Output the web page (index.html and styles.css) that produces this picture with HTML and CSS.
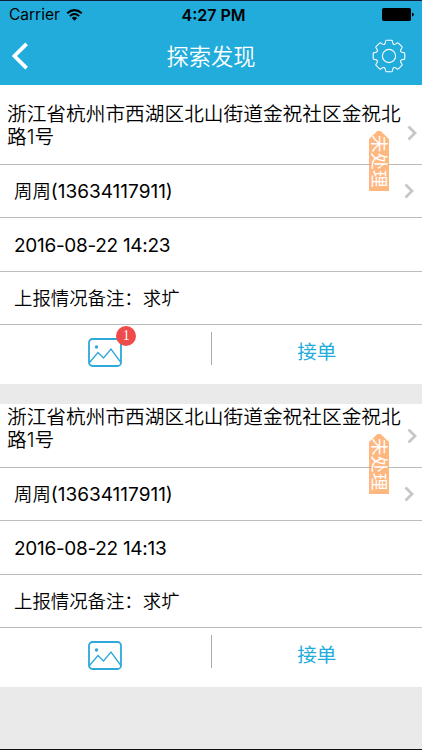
FILE: index.html
```html
<!DOCTYPE html>
<html lang="zh-CN">
<head>
  <meta charset="UTF-8">
  <meta name="viewport" content="width=device-width, initial-scale=1.0">
  <title>探索发现</title>
  <link rel="stylesheet" href="styles.css">
</head>
<body>
  <div class="app">
    <header class="header">
      <div class="status-bar">
        <div class="carrier">
          <span>Carrier</span>
          <svg class="wifi" width="17" height="12" viewBox="0 0 17 12">
            <path d="M1.2 4.3 Q8.5 -2 15.8 4.3" fill="none" stroke="#000" stroke-width="2"/>
            <path d="M3.8 7.1 Q8.5 3 13.2 7.1" fill="none" stroke="#000" stroke-width="1.9"/>
            <path d="M5.8 9 Q8.5 6.6 11.2 9 L8.5 11.8 Z" fill="#000"/>
          </svg>
        </div>
        <div class="time">4:27 PM</div>
        <svg class="battery" width="32" height="13" viewBox="0 0 32 13">
          <rect x="0" y="0" width="29" height="13" rx="1.8" fill="#000"/>
          <path d="M30 4.5 Q31.8 5 31.8 6.5 Q31.8 8 30 8.5 Z" fill="#000"/>
        </svg>
      </div>
      <nav class="nav-bar">
        <svg class="back" width="18" height="28" viewBox="0 0 18 28">
          <path d="M15.6 1.8 L3.4 14 L15.6 26.2" fill="none" stroke="#fff" stroke-width="3.8"/>
        </svg>
        <h1 class="title">探索发现</h1>
        <svg class="gear" width="34" height="34" viewBox="0 0 34 34" fill="none" stroke="#fff" stroke-width="1.1">
          <path id="teeth" d="M14.5 1.2 H19.5 Q20.3 1.2 20.4 2.2 C20.6 4.6 20.8 4.9 21.8 5.4 C22.8 5.8 23.4 5.6 24.9 4.2 Q25.7 3.5 26.4 4.1 L29.9 7.6 Q30.5 8.3 29.8 9.1 C28.4 10.6 28.2 11.2 28.6 12.2 C29.1 13.2 29.4 13.4 31.8 13.6 Q32.8 13.7 32.8 14.5"/>
          <use href="#teeth" transform="rotate(90 17 17)"/>
          <use href="#teeth" transform="rotate(180 17 17)"/>
          <use href="#teeth" transform="rotate(270 17 17)"/>
          <circle cx="17" cy="17" r="6.6"/>
        </svg>
      </nav>
    </header>

    <main class="list">
      <section class="card">
        <div class="row row-address">
          <p class="address">浙江省杭州市西湖区北山街道金祝社区金祝北路1号</p>
          <svg class="arrow" width="10" height="16" viewBox="0 0 10 16"><path d="M1.5 1.5 L8 8 L1.5 14.5" fill="none" stroke="#c7c7c7" stroke-width="2.8"/></svg>
          <div class="tag"><span>未处理</span></div>
        </div>
        <div class="row">
          <p class="text">周周<span class="num">(13634117911)</span></p>
          <svg class="arrow" width="10" height="16" viewBox="0 0 10 16"><path d="M1.5 1.5 L8 8 L1.5 14.5" fill="none" stroke="#c7c7c7" stroke-width="2.8"/></svg>
        </div>
        <div class="row"><p class="text num date">2016-08-22 14:23</p></div>
        <div class="row"><p class="text">上报情况备注：求圹</p></div>
        <div class="actions">
          <div class="action">
            <div class="photo">
              <svg width="34" height="30" viewBox="0 0 34 30">
                <rect x="1" y="1" width="32" height="27" rx="3.5" fill="none" stroke="#2ea7db" stroke-width="1.8"/>
                <path d="M1.5 24.5 L10 14.5 L15.5 20 L23 11 L32.5 24" fill="none" stroke="#2ea7db" stroke-width="1.3"/>
                <circle cx="8.5" cy="9" r="1.7" fill="#2ea7db"/>
              </svg>
              <span class="badge">1</span>
            </div>
          </div>
          <div class="divider"></div>
          <div class="action accept">接单</div>
        </div>
      </section>

      <section class="card">
        <div class="row row-address">
          <p class="address">浙江省杭州市西湖区北山街道金祝社区金祝北路1号</p>
          <svg class="arrow" width="10" height="16" viewBox="0 0 10 16"><path d="M1.5 1.5 L8 8 L1.5 14.5" fill="none" stroke="#c7c7c7" stroke-width="2.8"/></svg>
          <div class="tag"><span>未处理</span></div>
        </div>
        <div class="row">
          <p class="text">周周<span class="num">(13634117911)</span></p>
          <svg class="arrow" width="10" height="16" viewBox="0 0 10 16"><path d="M1.5 1.5 L8 8 L1.5 14.5" fill="none" stroke="#c7c7c7" stroke-width="2.8"/></svg>
        </div>
        <div class="row"><p class="text num date">2016-08-22 14:13</p></div>
        <div class="row"><p class="text">上报情况备注：求圹</p></div>
        <div class="actions">
          <div class="action">
            <div class="photo">
              <svg width="34" height="30" viewBox="0 0 34 30">
                <rect x="1" y="1" width="32" height="27" rx="3.5" fill="none" stroke="#2ea7db" stroke-width="1.8"/>
                <path d="M1.5 24.5 L10 14.5 L15.5 20 L23 11 L32.5 24" fill="none" stroke="#2ea7db" stroke-width="1.3"/>
                <circle cx="8.5" cy="9" r="1.7" fill="#2ea7db"/>
              </svg>
            </div>
          </div>
          <div class="divider"></div>
          <div class="action accept">接单</div>
        </div>
      </section>
    </main>
  </div>
</body>
</html>
```

FILE: styles.css
```css
* {
  box-sizing: border-box;
}

body {
  margin: 0;
  font-family: 'Inter', 'Noto Sans CJK SC', sans-serif;
  background-color: #eaeaea;
  color: #000;
}

h1, p {
  margin: 0;
  font-weight: normal;
}

svg {
  display: block;
}

.app {
  height: 750px;
  overflow: hidden;
  border-top: 1px solid #12203a;
  border-bottom: 1px solid #111;
}

.header {
  height: 84px;
  background-color: #21acdb;
}

.status-bar {
  height: 27px;
  display: grid;
  grid-template-columns: 1fr auto 1fr;
  align-items: center;
  padding: 0 8px 0 9px;
  font-size: 16px;
}

.carrier {
  display: flex;
  align-items: center;
  gap: 6px;
  font-size: 15.5px;
}

.time {
  font-weight: 600;
  padding-left: 4px;
}

.battery {
  justify-self: end;
}

.nav-bar {
  height: 56px;
  display: grid;
  grid-template-columns: 1fr auto 1fr;
  align-items: center;
  padding: 0 16px 0 11px;
  color: #fff;
}

.title {
  font-size: 22.3px;
  font-weight: 350;
  line-height: 30px;
  padding: 2px 0 0 5px;
}

.gear {
  justify-self: end;
}

.list {
  padding-top: 16px;
  background-image: linear-gradient(#fff 16px, transparent 16px);
}

.card {
  background-color: #fff;
  margin-bottom: 20px;
}

.row {
  position: relative;
  height: 53.33px;
  display: flex;
  align-items: center;
  justify-content: space-between;
  padding: 0 8px 0 14px;
  border-bottom: 1px solid #bcbcbc;
}

.row-address {
  height: 64px;
  align-items: flex-start;
  padding: 2px 5px 0 7px;
}

.row-address .arrow {
  margin-top: 22px;
}

.address {
  width: 398px;
  flex-shrink: 0;
  font-size: 19.7px;
  font-weight: 350;
  line-height: 23px;
  margin-right: -4px;
}

.text {
  font-size: 18.4px;
  font-weight: 350;
  line-height: 28px;
}

.num {
  font-size: 19px;
  font-weight: 400;
}

.date {
  letter-spacing: -0.3px;
  padding-top: 3px;
}

/* ribbon lies across the line between the first two rows */
.tag {
  position: absolute;
  z-index: 1;
  top: 30px;
  left: 369px;
  width: 20px;
  height: 60px;
  background-color: rgba(255, 135, 43, 0.6);
  clip-path: polygon(42% 0, 58% 0, 100% 8px, 100% 100%, 0 100%, 0 8px);
  color: #fff;
  font-size: 17.5px;
  line-height: 20px;
  writing-mode: vertical-rl;
  text-orientation: sideways;
  padding-top: 4px;
}

.actions {
  height: 59px;
  display: flex;
}

.action {
  flex: 1;
  display: flex;
  justify-content: center;
  padding-top: 13px;
}

.accept {
  color: #21acdb;
  font-size: 19.6px;
  line-height: 28px;
}

.divider {
  width: 1px;
  height: 33px;
  margin-top: 7px;
  background-color: #aaa;
}

.photo {
  position: relative;
  height: 30px;
}

.badge {
  position: absolute;
  top: -12px;
  right: -14px;
  width: 20px;
  height: 20px;
  border-radius: 50%;
  background-color: #ef4b4b;
  color: #fff;
  font-family: 'Liberation Serif', serif;
  font-size: 14px;
  line-height: 20px;
  text-align: center;
}
```
